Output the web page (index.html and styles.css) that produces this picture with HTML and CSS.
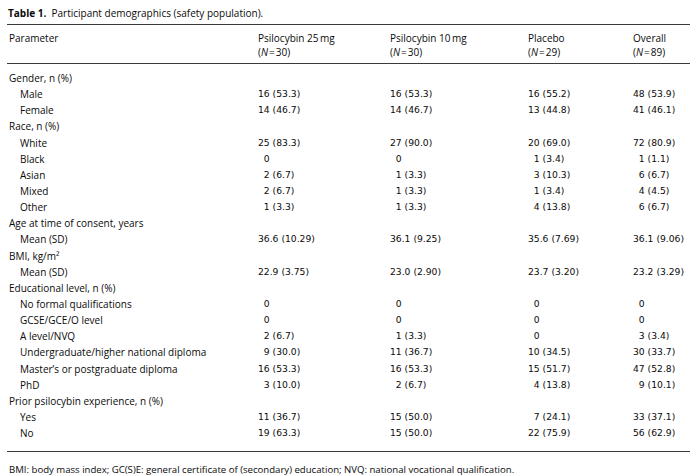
FILE: index.html
```html
<!DOCTYPE html>
<html>
<head>
<meta charset="utf-8">
<link rel="stylesheet" href="styles.css">
</head>
<body>
<div class="caption"><b>Table 1.</b>&nbsp; Participant demographics (safety population).</div>
<table class="tbl">
  <colgroup>
    <col class="c1"><col class="c2"><col class="c3"><col class="c4"><col class="c5">
  </colgroup>
  <thead>
    <tr>
      <th class="lab">Parameter</th>
      <th>Psilocybin 25&#8201;mg<br>(<i>N</i>&#8202;=&#8202;30)</th>
      <th>Psilocybin 10&#8201;mg<br>(<i>N</i>&#8202;=&#8202;30)</th>
      <th>Placebo<br>(<i>N</i>&#8202;=&#8202;29)</th>
      <th>Overall<br>(<i>N</i>&#8202;=&#8202;89)</th>
    </tr>
  </thead>
  <tbody>
    <tr class="first"><td class="lab">Gender, n (%)</td><td></td><td></td><td></td><td></td></tr>
    <tr><td class="lab sub">Male</td><td>16 (53.3)</td><td>16 (53.3)</td><td>16 (55.2)</td><td>48 (53.9)</td></tr>
    <tr><td class="lab sub">Female</td><td>14 (46.7)</td><td>14 (46.7)</td><td>13 (44.8)</td><td>41 (46.1)</td></tr>
    <tr><td class="lab">Race, n (%)</td><td></td><td></td><td></td><td></td></tr>
    <tr><td class="lab sub">White</td><td>25 (83.3)</td><td>27 (90.0)</td><td>20 (69.0)</td><td>72 (80.9)</td></tr>
    <tr><td class="lab sub">Black</td><td><span class="p"></span>0</td><td><span class="p"></span>0</td><td><span class="p"></span>1 (3.4)</td><td><span class="p"></span>1 (1.1)</td></tr>
    <tr><td class="lab sub">Asian</td><td><span class="p"></span>2 (6.7)</td><td><span class="p"></span>1 (3.3)</td><td><span class="p"></span>3 (10.3)</td><td><span class="p"></span>6 (6.7)</td></tr>
    <tr><td class="lab sub">Mixed</td><td><span class="p"></span>2 (6.7)</td><td><span class="p"></span>1 (3.3)</td><td><span class="p"></span>1 (3.4)</td><td><span class="p"></span>4 (4.5)</td></tr>
    <tr><td class="lab sub">Other</td><td><span class="p"></span>1 (3.3)</td><td><span class="p"></span>1 (3.3)</td><td><span class="p"></span>4 (13.8)</td><td><span class="p"></span>6 (6.7)</td></tr>
    <tr><td class="lab">Age at time of consent, years</td><td></td><td></td><td></td><td></td></tr>
    <tr><td class="lab sub">Mean (SD)</td><td>36.6 (10.29)</td><td>36.1 (9.25)</td><td>35.6 (7.69)</td><td>36.1 (9.06)</td></tr>
    <tr><td class="lab">BMI, kg/m²</td><td></td><td></td><td></td><td></td></tr>
    <tr><td class="lab sub">Mean (SD)</td><td>22.9 (3.75)</td><td>23.0 (2.90)</td><td>23.7 (3.20)</td><td>23.2 (3.29)</td></tr>
    <tr><td class="lab">Educational level, n (%)</td><td></td><td></td><td></td><td></td></tr>
    <tr><td class="lab sub">No formal qualifications</td><td><span class="p"></span>0</td><td><span class="p"></span>0</td><td><span class="p"></span>0</td><td><span class="p"></span>0</td></tr>
    <tr><td class="lab sub">GCSE/GCE/O level</td><td><span class="p"></span>0</td><td><span class="p"></span>0</td><td><span class="p"></span>0</td><td><span class="p"></span>0</td></tr>
    <tr><td class="lab sub">A level/NVQ</td><td><span class="p"></span>2 (6.7)</td><td><span class="p"></span>1 (3.3)</td><td><span class="p"></span>0</td><td><span class="p"></span>3 (3.4)</td></tr>
    <tr><td class="lab sub">Undergraduate/higher national diploma</td><td><span class="p"></span>9 (30.0)</td><td>11 (36.7)</td><td>10 (34.5)</td><td>30 (33.7)</td></tr>
    <tr><td class="lab sub">Master’s or postgraduate diploma</td><td>16 (53.3)</td><td>16 (53.3)</td><td>15 (51.7)</td><td>47 (52.8)</td></tr>
    <tr><td class="lab sub">PhD</td><td><span class="p"></span>3 (10.0)</td><td><span class="p"></span>2 (6.7)</td><td><span class="p"></span>4 (13.8)</td><td><span class="p"></span>9 (10.1)</td></tr>
    <tr><td class="lab">Prior psilocybin experience, n (%)</td><td></td><td></td><td></td><td></td></tr>
    <tr><td class="lab sub">Yes</td><td>11 (36.7)</td><td>15 (50.0)</td><td><span class="p"></span>7 (24.1)</td><td>33 (37.1)</td></tr>
    <tr class="last"><td class="lab sub">No</td><td>19 (63.3)</td><td>15 (50.0)</td><td>22 (75.9)</td><td>56 (62.9)</td></tr>
  </tbody>
</table>
<div class="foot">BMI: body mass index; GC(S)E: general certificate of (secondary) education; NVQ: national vocational qualification.</div>
</body>
</html>
```
FILE: styles.css
```css
html, body {
  margin: 0;
  padding: 0;
  background: #fff;
}
body {
  font-family: "Open Sans", "DejaVu Sans", sans-serif;
  color: #0a0a0a;
}
.caption {
  margin: 6px 0 0 8px;
  font-size: 10px;
  line-height: 14px;
  height: 14px;
}
.caption b {
  font-weight: 700;
}
.tbl {
  margin: 4px 0 0 7px;
  width: 683px;
  border-collapse: collapse;
  table-layout: fixed;
}
.c1 { width: 251px; }
.c2 { width: 132px; }
.c3 { width: 138px; }
.c4 { width: 105px; }
.c5 { width: 57px; }
thead tr {
  border-top: 1.5px solid #3a3a3a;
  border-bottom: 1.5px solid #3a3a3a;
}
th {
  text-align: left;
  font-weight: 400;
  font-size: 10px;
  line-height: 14px;
  padding: 6px 0 4px 0;
  vertical-align: top;
  white-space: nowrap;
}
th.lab {
  padding-left: 2px;
}
td {
  padding: 0;
  font-family: "DejaVu Sans", sans-serif;
  font-size: 9.2px;
  line-height: 16.14px;
  white-space: nowrap;
  vertical-align: middle;
}
td.lab {
  font-family: "Open Sans", "DejaVu Sans", sans-serif;
  font-size: 10px;
  padding-left: 2px;
}
td.sub {
  padding-left: 13px;
}
tr.first td {
  padding-top: 6px;
}
tr.last td {
  padding-bottom: 10px;
}
tbody tr.last {
  border-bottom: 1.5px solid #3a3a3a;
}
.p {
  display: inline-block;
  width: 1ch;
}
.foot {
  margin: 12px 0 0 9px;
  font-size: 9.6px;
  line-height: 12px;
}
```
